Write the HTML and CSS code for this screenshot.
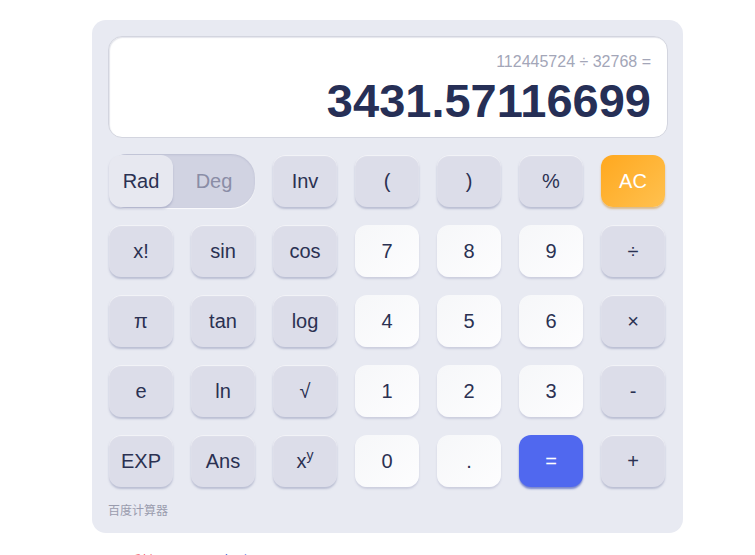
FILE: index.html
```html
<!DOCTYPE html>
<html lang="zh-CN">
<head>
    <meta charset="UTF-8">
    <meta name="viewport" content="width=device-width, initial-scale=1.0">
    <title>百度计算器</title>
    <link rel="stylesheet" href="styles.css">
</head>
<body>
    <div class="calc">
        <div class="screen">
            <div class="expr">112445724 ÷ 32768 =</div>
            <div class="result">3431.57116699</div>
        </div>

        <div class="keys">
            <div class="mode">
                <button class="mode-btn active">Rad</button>
                <button class="mode-btn">Deg</button>
            </div>
            <button class="key">Inv</button>
            <button class="key">(</button>
            <button class="key">)</button>
            <button class="key">%</button>
            <button class="key key-ac">AC</button>

            <button class="key">x!</button>
            <button class="key">sin</button>
            <button class="key">cos</button>
            <button class="key num">7</button>
            <button class="key num">8</button>
            <button class="key num">9</button>
            <button class="key">÷</button>

            <button class="key">π</button>
            <button class="key">tan</button>
            <button class="key">log</button>
            <button class="key num">4</button>
            <button class="key num">5</button>
            <button class="key num">6</button>
            <button class="key">×</button>

            <button class="key">e</button>
            <button class="key">ln</button>
            <button class="key">√</button>
            <button class="key num">1</button>
            <button class="key num">2</button>
            <button class="key num">3</button>
            <button class="key">-</button>

            <button class="key">EXP</button>
            <button class="key">Ans</button>
            <button class="key">x<sup>y</sup></button>
            <button class="key num">0</button>
            <button class="key num">.</button>
            <button class="key key-eq">=</button>
            <button class="key">+</button>
        </div>

        <div class="brand">百度计算器</div>
    </div>

    <div class="links">
        <a class="link red" href="#">反馈</a>
        <a class="link blue" href="#">帮助</a>
    </div>
</body>
</html>
```

FILE: styles.css
```css
body {
    margin: 0;
    background: #fff;
    font-family: "Liberation Sans", Arial, "Noto Sans CJK SC", sans-serif;
}

.calc {
    width: 560px;
    margin: 20px 0 0 92px;
    padding: 16px 15px 14px 16px;
    background: #e8eaf2;
    border-radius: 14px;
}

.screen {
    height: 100px;
    padding: 0 16px 0 0;
    background: #fff;
    border: 1px solid #d3d5df;
    border-radius: 14px;
    box-shadow: inset 1px 1px 1px rgba(180, 184, 200, 0.35);
    text-align: right;
}

.expr {
    padding-top: 15px;
    font-size: 16px;
    line-height: 20px;
    color: #a3a6b8;
}

.result {
    margin-top: 3px;
    font-size: 47px;
    font-weight: bold;
    line-height: 52px;
    color: #262f56;
}

.keys {
    display: grid;
    grid-template-columns: repeat(7, 64px);
    grid-auto-rows: 52px;
    gap: 18px;
    margin-top: 17px;
    padding-left: 1px;
}

.key {
    border: none;
    border-radius: 12px;
    background: #dcdde9;
    color: #2b3152;
    font-family: inherit;
    font-size: 20px;
    padding: 0;
    cursor: pointer;
    box-shadow: 0 2px 2px rgba(150, 154, 185, 0.55), inset 0 1px 1px rgba(255, 255, 255, 0.7);
}

.key sup {
    font-size: 14px;
    line-height: 0;
    vertical-align: 8px;
}

.num {
    background: linear-gradient(135deg, #f6f7f9, #fdfdfe);
    box-shadow: 0 2px 2px rgba(170, 174, 200, 0.45);
}

.key-ac {
    background: linear-gradient(135deg, #ffa81f, #ffc14f);
    color: #fff;
    box-shadow: 0 2px 2px rgba(205, 140, 40, 0.5);
}

.key-eq {
    background: #5068ef;
    color: #fff;
    box-shadow: 0 2px 2px rgba(50, 70, 180, 0.6);
}

.mode {
    grid-column: span 2;
    display: flex;
    margin: -1px 0;
    background: #d1d3e2;
    border-radius: 18px 24px 24px 18px;
    box-shadow: 0 1px 1px rgba(255, 255, 255, 0.8), inset 0 1px 2px rgba(160, 164, 190, 0.4);
}

.mode-btn {
    flex: 1;
    border: none;
    background: none;
    padding: 0;
    font-family: inherit;
    font-size: 20px;
    color: #8a8da6;
    border-radius: 12px;
}

.mode-btn.active {
    flex: 0 0 64px;
    margin: 1px 0;
    background: #e7e8f0;
    color: #2b3152;
    box-shadow: 0 2px 2px rgba(150, 154, 185, 0.5);
}

.brand {
    margin-top: 16px;
    font-size: 12px;
    line-height: 16px;
    color: #9a9cae;
}

.links {
    margin: 19px 0 0 128px;
    font-size: 14px;
    line-height: 18px;
}

.link {
    text-decoration: none;
    margin-right: 62px;
}

.red {
    color: #f03b4c;
}

.blue {
    color: #3a5bd9;
}
```
